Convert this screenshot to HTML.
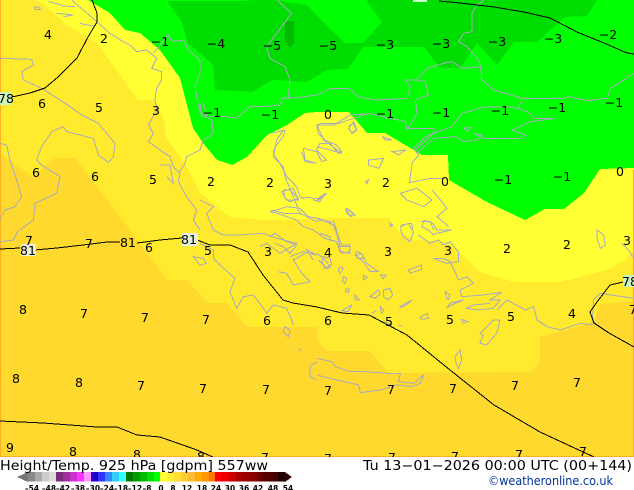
<!DOCTYPE html>
<html><head><meta charset="utf-8"><title>Height/Temp. 925 hPa</title>
<style>html,body{margin:0;padding:0;background:#fff}svg{display:block}</style></head>
<body>
<svg width="634" height="490" viewBox="0 0 634 490" xmlns="http://www.w3.org/2000/svg" font-family="'DejaVu Sans',sans-serif">
<svg x="0" y="0" width="634" height="457" viewBox="0 0 634 457">
<g shape-rendering="crispEdges">
<rect width="634" height="457" fill="#ffd92e"/>
<polygon fill="#ffea2e" points="0,0 634,0 634,301 600,304 594,322 540,337 540,362 530,372 389,373 369,351 327,351 317,340 317,327 247,327 227,303 208,303 187,280 167,280 130,230 75,158 55,158 33,177 0,153"/>
<polygon fill="#ffff33" points="33,0 42,3 67,25 97,43 138,100 155,100 165,123 165,135 173,147 187,167 200,193 230,217 263,220 287,220 317,218 389,218 397,230 414,240 444,242 457,250 480,272 514,282 560,282 607,270 625,260 634,250 634,0"/>
<polygon fill="#00ff00" points="88,0 110,13 125,30 140,33 160,50 180,78 193,128 203,143 217,160 232,165 247,157 267,135 287,125 305,113 317,112 349,112 367,133 385,133 422,155 448,155 449,180 487,202 525,220 545,209 564,209 584,193 600,169 634,168 634,0"/>
<polygon fill="#00dd00" points="167,1 243,1 255,0 277,0 287,2 307,5 323,22 345,43 363,43 382,22 368,3 367,0 597,0 587,16 565,17 537,42 514,42 497,65 477,43 460,68 440,68 424,47 363,47 348,69 327,70 307,82 272,80 253,92 215,90 213,65 188,43 182,22"/>
<polygon fill="#00bb00" points="285,21 294,21 294,43 290,48 285,43"/>
<rect x="413" y="0" width="14" height="2" fill="#ccffcc"/>
<rect x="0" y="0" width="1" height="457" fill="#ffb020"/>
<rect x="633" y="170" width="1" height="287" fill="#ffb020"/>
<rect x="0" y="456" width="634" height="1" fill="#ffb020"/>
</g>

<g fill="none" stroke="#a9a9bf" stroke-width="1" shape-rendering="crispEdges">
<g transform="scale(.33333)" stroke-width="3">
<polyline points="0,175 95,178 100,195 65,215 70,240 125,265 180,300 210,320 245,345 295,370 345,430 340,470 325,487 295,465 280,415 200,395 190,380 155,395 125,440 110,480 125,495 180,530 170,580 105,610 100,660 60,690"/>
<polyline points="0,430 20,435 30,480 50,540 65,590 45,620 15,630 0,660"/>
<polyline points="145,5 175,12 190,18 225,20"/>
<polyline points="170,40 220,45 190,50"/>
<polygon points="105,20 120,22 120,28 105,28"/>
<polyline points="240,70 285,80"/>
<polyline points="215,0 250,30 290,65 330,100 370,125 390,135 410,155 440,150 470,175 455,205 485,215 485,240 470,265 465,300 470,330 445,375 460,400 445,425 480,450 510,470 520,500 540,520 535,545 560,590 590,630 580,660 600,690"/>
<polyline points="460,160 505,105 515,125 550,120 565,150 600,180 600,220 585,260 590,290 600,340 635,360 640,400 610,420 600,450 560,470 555,490 535,520"/>
<polyline points="630,350 680,350 710,355 750,320 790,320 840,315 850,293 870,295 951,285"/>
<polyline points="865,293 870,240 855,200 810,175 800,140 830,100 875,40 830,0"/>
<polygon points="600,315 610,310 620,345 605,350"/>
<polyline points="480,495 510,495 520,550 500,530"/>
<polyline points="850,390 830,420 820,470 850,500 855,530 880,590 900,640 951,665"/>
<polyline points="815,630 850,640 900,640"/>
<polygon points="845,575 880,565 895,600 860,600"/>
<polyline points="600,600 640,620 620,640 640,690"/>
</g>
<g transform="translate(317,0) scale(.33333)" stroke-width="3">
<polyline points="0,285 40,265 95,265 125,290 175,300 270,295 280,260 265,240 300,240 330,205 380,190 405,185 435,205 490,200 485,180 450,140 425,125 440,100 465,95 465,40 480,15 500,0"/>
<polyline points="490,200 495,240 530,270 615,295 740,295 755,290 810,302 870,295 880,265 951,220"/>
<polyline points="615,295 605,325 640,340 650,355 715,355 640,365 585,390 625,405 610,415 500,415 470,400 495,405 480,420 440,425 415,410 350,415 320,440 300,460"/>
<polyline points="605,325 570,320 500,322 435,340 405,380 350,400 305,440 295,450"/>
<polyline points="0,375 50,375 110,355 155,340 265,365 270,390 300,340 295,300 335,285 325,245 300,240"/>
<polyline points="270,385 350,385 355,395 320,415 290,445 305,465 285,490 278,548 340,535 380,535"/>
<polygon points="440,385 462,382 450,395"/>
<polygon points="95,385 110,365 120,390 105,400"/>
<polygon points="195,410 225,420 205,420"/>
<polygon points="225,455 265,450 245,465"/>
<polygon points="155,480 200,475 185,505 155,495"/>
<polygon points="145,545 155,540 150,552"/>
<polygon points="250,580 300,565 345,600 320,620 270,600"/>
<polyline points="345,570 370,600 390,625 360,650 395,680"/>
<polyline points="0,375 20,420 75,460 40,450 0,440"/>
<polygon points="85,625 115,645 100,650"/>
<polyline points="0,600 30,580 0,605"/>
<polyline points="0,660 40,665 60,690"/>
<polyline points="250,680 275,670 285,690"/>
<polyline points="310,665 340,665 350,690"/>
</g>
<g transform="translate(270,110) scale(.33333)" stroke-width="3">
<polyline points="0,70 45,60 40,80 15,110 10,130 30,160 50,200 80,230 90,260 100,265 115,262 130,265"/>
<polyline points="140,45 145,70 165,90 175,95 200,105 215,125 205,130 180,100 150,100 140,120 170,150 155,155 140,125 100,115 105,150 140,160 105,155 95,125"/>
<polyline points="140,45 155,40 200,40 240,15 285,12 300,10"/>
<polygon points="240,45 250,40 260,60 245,68 237,55"/>
<polygon points="0,305 20,300 50,290 90,295 115,320 145,325 190,345 200,370 210,410 240,410 240,425 215,430 200,395 165,385 130,360 100,350 80,330 50,320 20,310"/>
<polygon points="40,240 60,240 85,265 60,275 45,265"/>
<polygon points="130,265 145,265 165,250 150,275 130,270"/>
<polygon points="230,295 250,310 240,318 228,305"/>
<polyline points="0,380 15,370 50,395 80,405 60,430 40,410 15,400"/>
<polyline points="60,440 100,425 140,435 110,420 130,450"/>
<polygon points="260,435 275,430 280,445 262,445"/>
</g>
<g transform="translate(320,220) scale(.33333)" stroke-width="3">
<polygon points="210,10 218,15 212,20"/>
<polygon points="245,15 275,10 280,40 270,65 250,50 242,30"/>
<polyline points="310,0 340,10 350,30 395,30 350,40 340,45 325,30 305,20 315,0"/>
<polyline points="295,45 330,70 355,60 370,75 390,65 415,95 415,125 380,130 340,115 370,115 390,125 405,155 415,180 440,170 460,190 420,210 425,230 490,225 545,217 510,240 540,240 520,265 470,270 440,265 460,255 510,250"/>
<polyline points="40,0 55,50 65,75 90,75 90,100 60,95 50,65"/>
<polyline points="0,40 30,50 30,65"/>
<polygon points="10,110 30,115 35,135 15,145 5,125"/>
<polygon points="110,95 125,100 140,130 175,155 150,155 130,125 105,105"/>
<polygon points="60,140 70,145 60,160 55,150"/>
<polygon points="70,170 80,175 75,190 68,185"/>
<polygon points="130,165 142,172 130,180"/>
<polygon points="182,165 198,165 190,176"/>
<polygon points="77,207 88,207 85,217 77,215"/>
<polygon points="105,225 118,240 105,240"/>
<polygon points="150,230 175,210 180,222 165,235"/>
<polygon points="190,210 210,205 218,225 205,240 190,230"/>
<polygon points="265,150 305,135 305,148 270,160"/>
<polygon points="240,260 275,240 265,250 245,262"/>
<polygon points="380,265 390,250 430,240 395,255"/>
<polygon points="375,215 390,225 385,238 380,235"/>
<polygon points="300,292 322,280 325,295 305,298"/>
<polygon points="425,298 445,305 430,310"/>
<polygon points="480,340 520,300 540,300 530,340 500,375 480,370 490,345"/>
<polygon points="405,410 420,390 425,420 415,445 408,430"/>
<polygon points="180,260 192,270 185,280"/>
<polyline points="155,280 170,272"/>
<polygon points="65,272 95,255 85,275"/>
<polyline points="195,305 215,318"/>
<polyline points="235,315 248,318"/>
</g>
<g transform="translate(317,230) scale(.33333)" stroke-width="3">
<polyline points="0,385 45,395 55,410 100,425 145,425 210,430 250,430 245,455 290,460 320,435 310,460 285,470 240,465 190,480 130,488 125,465 60,450 0,435"/>
<polyline points="540,240 570,210 625,240 650,230 660,270 690,290 730,300 790,280 825,285 830,210 850,190 951,205"/>
<polygon points="840,0 860,15 865,45 850,55 840,25"/>
<polyline points="915,40 930,55 951,85"/>
<polyline points="0,70 20,85 40,110 30,115 5,90"/>
</g>
<g transform="translate(0,230) scale(.33333)" stroke-width="3">
<polygon points="580,80 610,85 620,100 600,105"/>
<polyline points="600,40 640,60 640,85 665,110 705,145 690,185 710,235 730,200 760,195 790,235 800,250 820,225 860,235 875,270 880,285"/>
<polyline points="640,0 670,15 715,15 790,10 830,25 890,40 840,70 800,40 780,50"/>
<polyline points="835,125 860,130 880,165 930,155 905,130 880,90 925,65"/>
<polygon points="855,290 870,300 865,320 850,305"/>
<polyline points="895,355 902,362"/>
<polyline points="951,395 930,410 930,440 951,450"/>
<polyline points="0,35 40,30 55,0"/>
</g>
</g>

<g fill="none" stroke="#000" stroke-width="1" shape-rendering="crispEdges">
<polyline points="12,97 30,93 45,88 58,77 77,58 88,37 97,22 97,13 92,0"/>
<polyline points="439,1 460,3 494,7 524,12 550,18 577,32 604,43 627,53 634,54"/>
<polyline points="0,249 20,248"/>
<polyline points="35,250 57,248 83,245 107,242 120,242"/>
<polyline points="137,243 160,240 182,238"/>
<polyline points="197,240 210,245 230,245 248,252 263,275 283,300 293,303 317,307 342,313 369,315 407,335 450,370 494,405 540,432 594,457"/>
<polyline points="623,282 610,285 597,302 590,312 594,323 609,333 634,347"/>
<polyline points="0,421 43,423 97,427 117,427 137,435 160,437 197,450 213,457"/>
</g>

<rect x="0" y="92" width="12" height="13" fill="#ccf5bb"/>
<rect x="21" y="244" width="15" height="12" fill="#eeeedd"/>
<rect x="182" y="233" width="16" height="13" fill="#e6f0dd"/>
<rect x="623" y="275" width="11" height="12" fill="#ccf5bb"/>

<g font-size="12.5" fill="#000" text-anchor="middle">
<text x="6" y="103">78</text><text x="28" y="255">81</text><text x="128" y="247">81</text><text x="189" y="244">81</text><text x="630" y="286">78</text>
<text x="48" y="39">4</text><text x="104" y="43">2</text><text x="160" y="46">−1</text><text x="216" y="48">−4</text><text x="272" y="50">−5</text><text x="328" y="50">−5</text><text x="385" y="49">−3</text><text x="441" y="48">−3</text><text x="497" y="46">−3</text><text x="553" y="43">−3</text><text x="608" y="39">−2</text>
<text x="42" y="108">6</text><text x="99" y="112">5</text><text x="156" y="115">3</text><text x="212" y="117">−1</text><text x="270" y="119">−1</text><text x="328" y="119">0</text><text x="385" y="118">−1</text><text x="441" y="117">−1</text><text x="500" y="115">−1</text><text x="557" y="112">−1</text><text x="614" y="107">−1</text>
<text x="36" y="177">6</text><text x="95" y="181">6</text><text x="153" y="184">5</text><text x="211" y="186">2</text><text x="270" y="187">2</text><text x="328" y="188">3</text><text x="386" y="187">2</text><text x="445" y="186">0</text><text x="503" y="184">−1</text><text x="562" y="181">−1</text><text x="620" y="176">0</text>
<text x="29" y="245">7</text><text x="89" y="248">7</text><text x="149" y="252">6</text><text x="208" y="255">5</text><text x="268" y="256">3</text><text x="328" y="257">4</text><text x="388" y="256">3</text><text x="448" y="255">3</text><text x="507" y="253">2</text><text x="567" y="249">2</text><text x="627" y="245">3</text>
<text x="23" y="314">8</text><text x="84" y="318">7</text><text x="145" y="322">7</text><text x="206" y="324">7</text><text x="267" y="325">6</text><text x="328" y="325">6</text><text x="389" y="326">5</text><text x="450" y="324">5</text><text x="511" y="321">5</text><text x="572" y="318">4</text><text x="633" y="314">7</text>
<text x="16" y="383">8</text><text x="79" y="387">8</text><text x="141" y="390">7</text><text x="203" y="393">7</text><text x="266" y="394">7</text><text x="328" y="395">7</text><text x="391" y="394">7</text><text x="453" y="393">7</text><text x="515" y="390">7</text><text x="577" y="387">7</text>
<text x="10" y="452">9</text><text x="73" y="456">8</text><text x="137" y="459">8</text><text x="201" y="461">8</text><text x="265" y="462">7</text><text x="328" y="463">7</text><text x="392" y="462">7</text><text x="455" y="461">7</text><text x="519" y="459">7</text><text x="583" y="456">7</text>
</g>
</svg>

<g shape-rendering="crispEdges">
<polygon points="17,477 28,472 28,482" fill="#777"/>
<rect x="28" y="472" width="7" height="9.5" fill="#888"/><rect x="35" y="472" width="7" height="9.5" fill="#aaa"/><rect x="42" y="472" width="7" height="9.5" fill="#ccc"/><rect x="49" y="472" width="7" height="9.5" fill="#ddd"/>
<rect x="56" y="472" width="7" height="9.5" fill="#7a2e7a"/><rect x="63" y="472" width="7" height="9.5" fill="#a030a0"/><rect x="70" y="472" width="7" height="9.5" fill="#cc33cc"/><rect x="77" y="472" width="7" height="9.5" fill="#ff33ff"/><rect x="84" y="472" width="7" height="9.5" fill="#ff99ff"/>
<rect x="91" y="472" width="7" height="9.5" fill="#2200cc"/><rect x="98" y="472" width="7" height="9.5" fill="#3333ff"/><rect x="105" y="472" width="7" height="9.5" fill="#3388ff"/><rect x="112" y="472" width="7" height="9.5" fill="#33ccff"/><rect x="119" y="472" width="7" height="9.5" fill="#33ffff"/>
<rect x="126" y="472" width="7" height="9.5" fill="#007700"/><rect x="133" y="472" width="7" height="9.5" fill="#009900"/><rect x="140" y="472" width="7" height="9.5" fill="#00bb00"/><rect x="147" y="472" width="7" height="9.5" fill="#00dd00"/><rect x="154" y="472" width="6" height="9.5" fill="#00ff00"/>
<rect x="160" y="472" width="7" height="9.5" fill="#ffff33"/><rect x="167" y="472" width="7" height="9.5" fill="#ffee33"/><rect x="174" y="472" width="7" height="9.5" fill="#ffdd33"/><rect x="181" y="472" width="7" height="9.5" fill="#ffcc33"/><rect x="188" y="472" width="7" height="9.5" fill="#ffbb33"/><rect x="195" y="472" width="7" height="9.5" fill="#ffaa00"/><rect x="202" y="472" width="7" height="9.5" fill="#ff9900"/><rect x="209" y="472" width="6" height="9.5" fill="#ff7700"/>
<rect x="215" y="472" width="7" height="9.5" fill="#ff0000"/><rect x="222" y="472" width="7" height="9.5" fill="#ee0000"/><rect x="229" y="472" width="7" height="9.5" fill="#cc0000"/><rect x="236" y="472" width="7" height="9.5" fill="#aa0000"/><rect x="243" y="472" width="7" height="9.5" fill="#990000"/><rect x="250" y="472" width="7" height="9.5" fill="#880000"/><rect x="257" y="472" width="7" height="9.5" fill="#660000"/><rect x="264" y="472" width="7" height="9.5" fill="#550000"/><rect x="271" y="472" width="7" height="9.5" fill="#440000"/><rect x="278" y="472" width="7" height="9.5" fill="#220000"/>
<polygon points="285,472 292,477 285,482" fill="#330000"/>
</g>

<text x="0" y="470" font-size="13" fill="#000" textLength="268" lengthAdjust="spacingAndGlyphs">Height/Temp. 925 hPa [gdpm] 557ww</text>
<text x="363" y="470" font-size="13" fill="#000" textLength="269" lengthAdjust="spacingAndGlyphs">Tu 13−01−2026 00:00 UTC (00+144)</text>
<text x="488" y="485" font-size="12.5" fill="#003399" textLength="125" lengthAdjust="spacingAndGlyphs">©weatheronline.co.uk</text>

<g font-size="7.5" font-weight="bold" fill="#000" text-anchor="middle">
<text x="32" y="491">–54</text><text x="49" y="491">–48</text><text x="63" y="491">–42</text><text x="78" y="491">–38</text><text x="93" y="491">–30</text><text x="107" y="491">–24</text><text x="121" y="491">–18</text><text x="135" y="491">–12</text><text x="147" y="491">–8</text><text x="161" y="491">0</text><text x="173" y="491">8</text><text x="187" y="491">12</text><text x="202" y="491">18</text><text x="216" y="491">24</text><text x="230" y="491">30</text><text x="244" y="491">36</text><text x="258" y="491">42</text><text x="273" y="491">48</text><text x="288" y="491">54</text>
</g>
</svg>
</body></html>
